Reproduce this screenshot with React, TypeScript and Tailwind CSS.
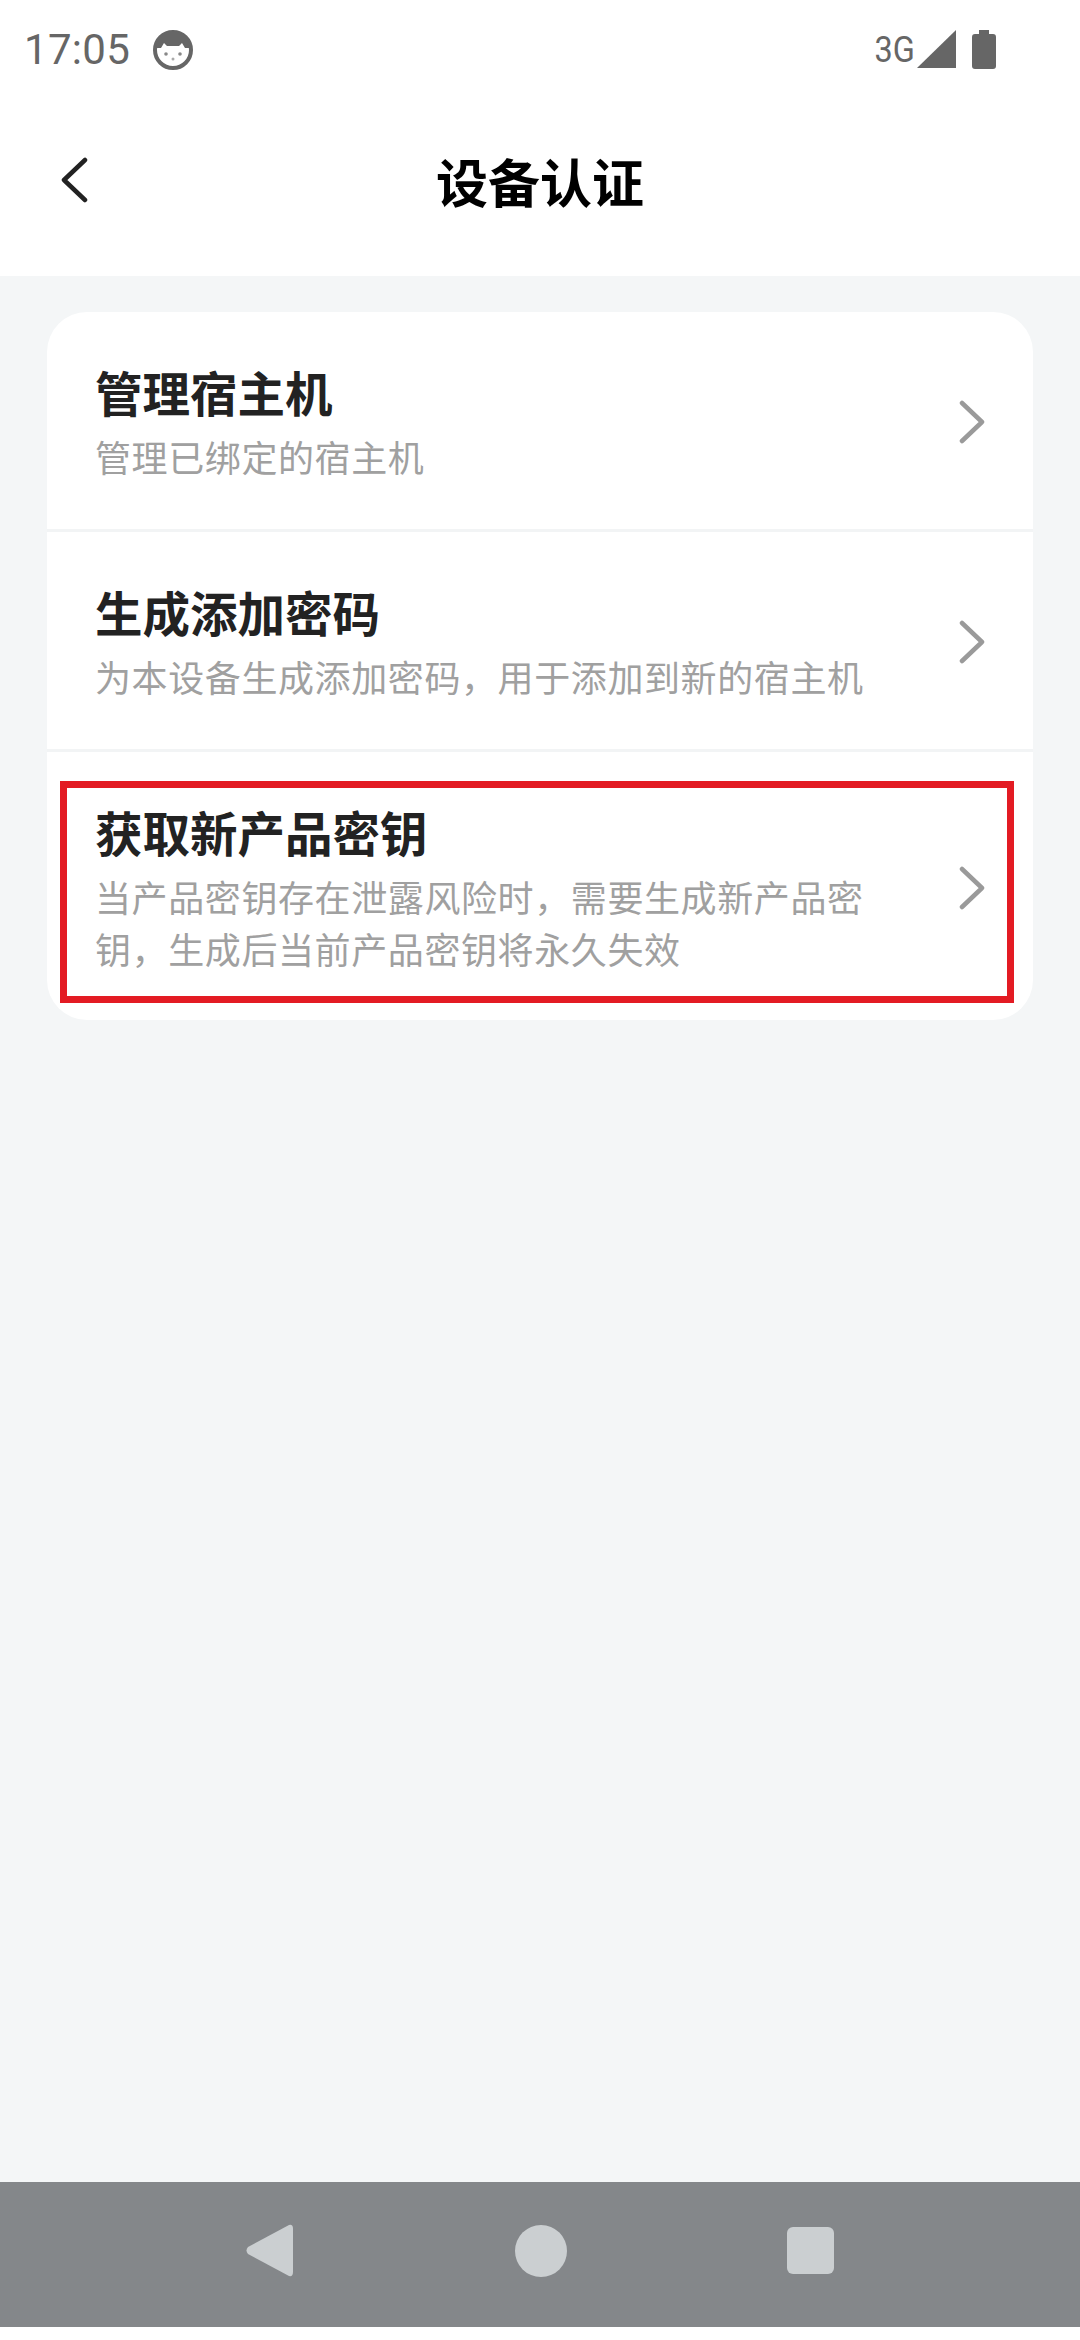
import React from "react";

const CJK = "font-['Noto_Sans_CJK_SC','Noto_Sans',sans-serif]";

const Chevron: React.FC = () => (
  <svg width="26" height="44" viewBox="0 0 26 44" fill="none" className="shrink-0">
    <path d="M3 3 L23 22 L3 41" stroke="#9a9a9a" strokeWidth="4.5" strokeLinecap="round" strokeLinejoin="round" />
  </svg>
);

const rows = [
  { title: "管理宿主机", sub: "管理已绑定的宿主机" },
  { title: "生成添加密码", sub: "为本设备生成添加密码，用于添加到新的宿主机" },
  { title: "获取新产品密钥", sub: "当产品密钥存在泄露风险时，需要生成新产品密钥，生成后当前产品密钥将永久失效", marked: true },
];

export default function App() {
  return (
    <div className={`w-[1080px] h-[2340px] flex flex-col bg-white overflow-hidden ${CJK}`}>
      {/* Status bar */}
      <div className="h-[97px] shrink-0 flex items-center pl-[24px] pr-[84px] pt-[2px] text-[#666]">
        <span className="font-['Roboto',sans-serif] text-[42px] leading-none tracking-[0.3px]">17:05</span>
        <svg width="40" height="40" viewBox="0 0 40 40" className="ml-[23px]">
          <circle cx="20" cy="20" r="18" fill="#fff" stroke="#666" strokeWidth="4" />
          <path d="M3 18 A17 17 0 0 1 37 18 L32 18 L29 13 L26 16 L14 16 L11 13 L8 18 Z" fill="#666" />
          <circle cx="13" cy="24" r="1.8" fill="#888" />
          <circle cx="27" cy="24" r="1.8" fill="#888" />
          <circle cx="20" cy="29" r="1.5" fill="#aaa" />
        </svg>
        <div className="ml-auto flex items-center">
          <span className="font-['Roboto',sans-serif] text-[36px] leading-none scale-x-[0.9] origin-right">3G</span>
          <svg width="40" height="39" viewBox="0 0 40 39" className="ml-[2px]">
            <path d="M39 0 V38 H0 Z" fill="#666" />
          </svg>
          <svg width="24" height="39" viewBox="0 0 24 39" className="ml-[15px]">
            <path d="M7 0 H17 V4 H21 Q24 4 24 7 V36 Q24 39 21 39 H3 Q0 39 0 36 V7 Q0 4 3 4 H7 Z" fill="#666" />
          </svg>
        </div>
      </div>

      {/* Header */}
      <div className="relative h-[179px] shrink-0 flex items-center justify-center pb-[12px]">
        <svg width="28" height="46" viewBox="0 0 28 46" className="absolute left-[60px] top-[60px]">
          <path d="M25 3 L4 23 L25 43" fill="none" stroke="#222" strokeWidth="4.5" strokeLinecap="round" strokeLinejoin="round" />
        </svg>
        <h1 className="text-[52px] leading-none font-bold text-black">设备认证</h1>
      </div>

      {/* Content */}
      <div className="flex-1 bg-[#f4f6f7] px-[47px] pt-[36px]">
        <div className="bg-white rounded-[40px] flex flex-col divide-y-[3px] divide-[#f2f4f5]">
          {rows.map((row) => (
            <div key={row.title} className={`relative flex items-center pl-[48px] pr-[48px] pt-[50px] ${row.marked ? "pb-[46px]" : "pb-[47px]"}`}>
              <div className="w-[790px]">
                <div className="text-[47.5px] leading-[60px] font-bold text-[#222]">{row.title}</div>
                <div className="mt-[8px] text-[36px] leading-[52px] tracking-[0.6px] text-[#a0a0a0]">{row.sub}</div>
              </div>
              <div className="ml-auto">
                <Chevron />
              </div>
              {row.marked && (
                <div className="absolute left-[13px] top-[29px] w-[954px] h-[222px] border-[7px] border-[#e31b23]" />
              )}
            </div>
          ))}
        </div>
      </div>

      {/* Navigation bar */}
      <div className="h-[145px] shrink-0 bg-[#84878a] flex items-center justify-center pb-[8px]">
        <svg width="47" height="53" viewBox="0 0 47 53">
          <path d="M43 1 Q47 0 47 5 V48 Q47 53 43 52 L2 30 Q-1 26.5 2 23 Z" fill="#cbcfd1" />
        </svg>
        <div className="w-[52px] h-[52px] ml-[222px] rounded-full bg-[#cbcfd1]" />
        <div className="w-[47px] h-[47px] ml-[220px] rounded-[6px] bg-[#cbcfd1]" />
      </div>
      <div className="h-[13px] shrink-0 bg-white" />
    </div>
  );
}
